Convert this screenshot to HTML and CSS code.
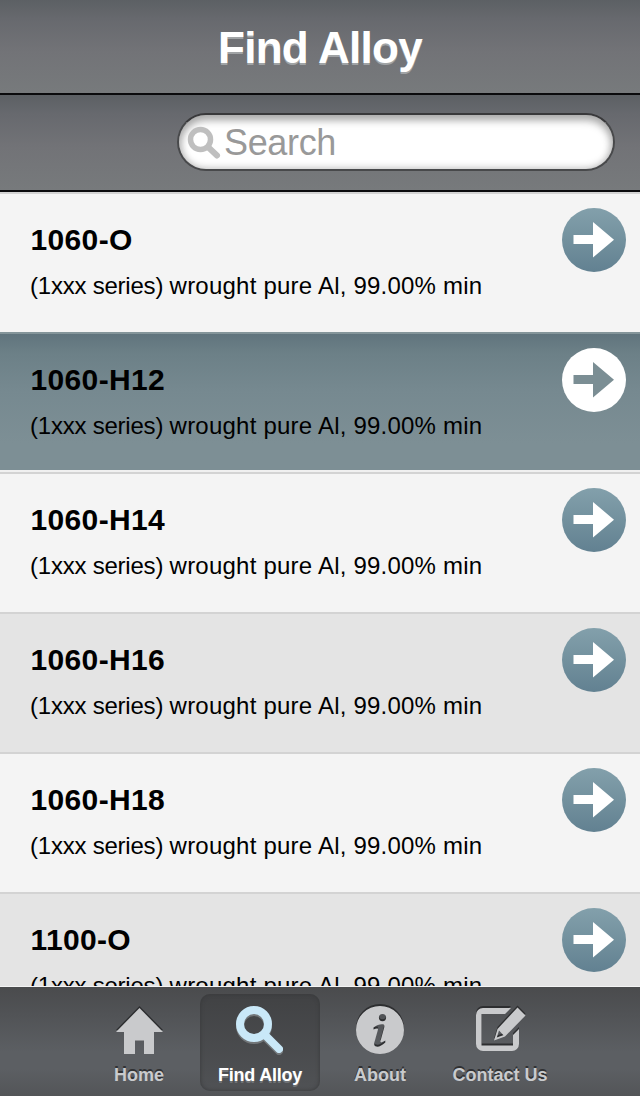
FILE: index.html
```
<!DOCTYPE html>
<html lang="en">
<head>
<meta charset="utf-8">
<title>Find Alloy</title>
<link rel="stylesheet" href="styles.css">
</head>
<body>
<svg class="defs" width="0" height="0" aria-hidden="true">
  <defs>
    <linearGradient id="teal" x1="0" y1="0" x2="0" y2="1"><stop offset="0" stop-color="#83a0ab"/><stop offset="1" stop-color="#628191"/></linearGradient>
    <symbol id="go" viewBox="0 0 64 64"><circle class="disc" cx="32" cy="32" r="32"/><path class="arrow" d="M11.500 27H31V14L52 31.700L31 49.500V36H11.500z"/></symbol>
  </defs>
</svg>
<div class="app">
  <header class="title-bar"><h1>Find Alloy</h1></header>
  <div class="search-bar">
    <div class="search-field">
      <svg class="search-icon" width="34" height="34" viewBox="0 0 34 34"><circle cx="13.500" cy="13.500" r="10" fill="none" stroke="#bfbfbf" stroke-width="5.500"/><path d="M21 21l9 8.500" stroke="#bfbfbf" stroke-width="6" stroke-linecap="round"/></svg>
      <span class="placeholder">Search</span>
    </div>
  </div>
  <main class="list">
    <article class="row"><div class="copy"><h2>1060-O</h2><p><span class="series">(1xxx series) </span>wrought pure Al, 99.00% min</p></div><svg class="go"><use href="#go"/></svg></article>
    <article class="row selected"><div class="copy"><h2>1060-H12</h2><p><span class="series">(1xxx series) </span>wrought pure Al, 99.00% min</p></div><svg class="go"><use href="#go"/></svg></article>
    <article class="row"><div class="copy"><h2>1060-H14</h2><p><span class="series">(1xxx series) </span>wrought pure Al, 99.00% min</p></div><svg class="go"><use href="#go"/></svg></article>
    <article class="row shaded"><div class="copy"><h2>1060-H16</h2><p><span class="series">(1xxx series) </span>wrought pure Al, 99.00% min</p></div><svg class="go"><use href="#go"/></svg></article>
    <article class="row"><div class="copy"><h2>1060-H18</h2><p><span class="series">(1xxx series) </span>wrought pure Al, 99.00% min</p></div><svg class="go"><use href="#go"/></svg></article>
    <article class="row shaded"><div class="copy"><h2>1100-O</h2><p><span class="series">(1xxx series) </span>wrought pure Al, 99.00% min</p></div><svg class="go"><use href="#go"/></svg></article>
  </main>
  <nav class="tabs">
    <div class="tab">
      <svg class="icon" viewBox="0 0 56 56"><path d="M27.500 6L51 30H42V52H32V38.500H23V52H12V30H4z"/></svg>
      <span>Home</span>
    </div>
    <div class="tab active">
      <svg class="icon" viewBox="0 0 56 56"><circle cx="22" cy="22" r="14" fill="none" stroke="#c9e8f8" stroke-width="8"/><path d="M33 33l14 14" fill="none" stroke="#c9e8f8" stroke-width="8" stroke-linecap="round"/></svg>
      <span>Find Alloy</span>
    </div>
    <div class="tab">
      <svg class="icon" viewBox="0 0 56 56"><path fill-rule="evenodd" d="M28 4a24 24 0 1 0 0 48a24 24 0 1 0 0-48zM30.500 12a3.600 3.600 0 1 1 0 7.200a3.600 3.600 0 1 1 0-7.200zM21.500 25.500C25 23 28 22 31 22.300C32.500 22.500 32.500 24 32.200 25.500L28.500 39C28 41 30 40.500 33.300 38.500V40.500C29.500 44 26 45.500 23.500 44.300C22 43.500 22 42 22.500 40L26 27.500C26 26 24 26.500 21.500 27.500z"/></svg>
      <span>About</span>
    </div>
    <div class="tab">
      <svg class="icon" viewBox="0 0 56 56"><path d="M39 6H11a7 7 0 0 0-7 7V42a7 7 0 0 0 7 7H40a7 7 0 0 0 7-7V27L41 33V43.500H9.500V12H33z"/><path fill-rule="evenodd" d="M45.500 5.500L53.500 13.500L33 34.500L22 38.500L25.500 27zM27 28.500L24.800 35.500L31.500 33.200z"/></svg>
      <span>Contact Us</span>
    </div>
  </nav>
</div>
</body>
</html>
```
FILE: styles.css
```
* { box-sizing: border-box; }
body { margin: 0; font-family: "Liberation Sans", Arial, sans-serif; }
h1, h2, p { margin: 0; }
.defs { display: block; }
.app { display: flex; flex-direction: column; width: 640px; height: 1096px; overflow: hidden; }
.title-bar, .search-bar { flex: none; background: linear-gradient(#5c6064, #67696e 20%, #727377 55%, #777a7c); border-bottom: 2px solid #0b0b0d; }
.title-bar { height: 95px; text-align: center; color: #fff; }
.title-bar h1 { font-size: 44px; line-height: 50px; padding-top: 23px; letter-spacing: -.7px; text-shadow: 0 2px 0 #a0a3a5; }
.search-bar { height: 97px; padding: 18px 25px 0 177px; }
.search-field { height: 58px; border: 2px solid #48494b; border-top-color: #39393b; border-radius: 29px; background: #fff; display: flex; padding: 10px 0 0 8px; box-shadow: inset 0 5px 8px #aaa, inset 0 0 8px #bbb; }
.search-icon { flex: none; margin-top: 1px; }
.placeholder { font-size: 36px; line-height: 36px; margin-left: 3px; letter-spacing: -.35px; color: #999; }
.list { flex: 1; min-height: 0; overflow: hidden; }
.row { height: 140px; border-top: 2px solid #d3d3d3; background: #f4f4f4; padding: 14px 14px 0 30px; display: flex; justify-content: space-between; }
.shaded { background: #e4e4e4; }
.selected { border-top-color: #84959a; border-bottom: 2px solid #f0f0f0; background: linear-gradient(#60747d, #6c8087 14%, #768990 42%, #7d8f95 80%, #7d8f95) padding-box; }
.copy { padding-top: 13px; color: #000; white-space: nowrap; }
.row h2 { font-size: 30px; line-height: 38px; letter-spacing: .35px; padding-left: .5px; }
.row p { font-size: 24px; line-height: 30px; padding-top: 12px; letter-spacing: .22px; }
.series { letter-spacing: -.22px; }
.go { width: 64px; height: 64px; flex: none; display: block; }
.disc { fill: var(--disc, url(#teal)); }
.arrow { fill: var(--arrow, #fff); }
.selected .go { --disc: #fff; --arrow: #7b8e94; }
.tabs { flex: none; height: 110px; border-top: 1px solid #f4f4f4; background: linear-gradient(#4a4b4d, #515356 25%, #5c5f63 60%, #5c5f63 75%, #535558); display: flex; justify-content: center; padding-top: 7px; }
.tab { width: 120px; height: 97px; padding-top: 8px; display: flex; flex-direction: column; align-items: center; font-weight: bold; font-size: 18px; line-height: 22px; color: #c9cbcd; text-shadow: 0 -2px 0 #303133; border-radius: 10px; }
.tab span { margin-top: 6px; }
.tab:first-child span { margin-left: -2px; }
.icon { width: 56px; height: 56px; fill: #c9cacc; filter: drop-shadow(0 -2px 0 #2d2e30); }
.active { background: linear-gradient(#414244, #505255); box-shadow: inset 0 0 4px #37383a; color: #fff; letter-spacing: -.25px; text-shadow: 0 2px 0 #707376; }
.active .icon { filter: drop-shadow(0 2px 0 #727679); }
```
